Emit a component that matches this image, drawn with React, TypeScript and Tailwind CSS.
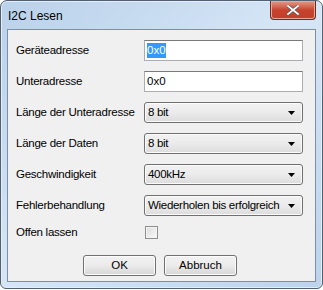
import React from 'react';

const font = { fontFamily: '"Liberation Sans", Arial, sans-serif' };

function Arrow() {
  return (
    <svg width="7" height="4" viewBox="0 0 7 4" className="shrink-0">
      <path d="M0 0h7L3.5 4z" fill="#000" />
    </svg>
  );
}

function Select({ value }: { value: string }) {
  return (
    <div className="h-[21px] w-[159px] shrink-0 flex items-center justify-between rounded-[3px] border border-[#707070] bg-gradient-to-b from-[#f2f2f2] via-[#ebebeb] to-[#dcdcdc] pl-[3px] pr-[7px] shadow-[inset_0_0_0_1px_#fbfbfb]">
      <span className="text-[11.5px] tracking-[-0.3px] text-black leading-none whitespace-nowrap">{value}</span>
      <Arrow />
    </div>
  );
}

function TextBox({ value, selected }: { value: string; selected?: boolean }) {
  return (
    <div className="h-[21px] w-[159px] shrink-0 flex items-center border border-[#abadb3] border-t-[#7a7a7a] bg-white px-[2px]">
      <span
        className={
          'text-[11.5px] leading-[15px] ' +
          (selected ? 'bg-[#3399ff] text-white' : 'text-black')
        }
      >
        {value}
      </span>
    </div>
  );
}

function Row({ label, children, h = 'h-[21px]' }: { label: string; children: React.ReactNode; h?: string }) {
  return (
    <div className={'flex items-center ' + h}>
      <span className="w-[128px] shrink-0 whitespace-nowrap text-[11.5px] tracking-[-0.25px] text-black leading-none">{label}</span>
      {children}
    </div>
  );
}

function Button({ label }: { label: string }) {
  return (
    <div className="h-[21px] w-[73px] flex items-center justify-center rounded-[3px] border border-[#707070] bg-gradient-to-b from-[#f2f2f2] via-[#ebebeb] to-[#d6d6d6] shadow-[inset_0_0_0_1px_#fcfcfc] text-[11.5px] text-black">
      {label}
    </div>
  );
}

export default function App() {
  return (
    <div className="w-[323px] h-[290px] bg-white" style={font}>
      <div className="w-[323px] h-[289px] flex flex-col rounded-t-[7px] rounded-b-[6px] border border-[#52606f] bg-gradient-to-br from-[#b9d1ea] via-[#d6e6f6] to-[#bcd3ec] px-[6px] pb-[6px] shadow-[inset_0_0_0_1px_#e4eef9]">
        {/* Title bar */}
        <div className="h-[28px] flex items-start justify-between shrink-0">
          <span className="pl-[1px] pt-[7px] text-[12px] text-black leading-[16px]">I2C Lesen</span>
          <div className="w-[46px] h-[19px] flex items-center justify-center rounded-b-[4px] border border-t-0 border-[#6d2a22] bg-gradient-to-b from-[#e09a8a] via-[#c8432d] to-[#c0402c] shadow-[inset_0_0_0_1px_#eaa898]">
            <svg width="12" height="10" viewBox="0 0 12 10">
              <path d="M1 1l10 8M11 1L1 9" stroke="#555" strokeWidth="3.2" strokeLinecap="square" />
              <path d="M1 1l10 8M11 1L1 9" stroke="#fff" strokeWidth="1.8" strokeLinecap="square" />
            </svg>
          </div>
        </div>

        {/* Client area */}
        <div className="flex-1 flex flex-col border border-[#7d8fa5] bg-[#f0f0f0] pl-[8px] pt-[10px]">
          <div className="flex flex-col gap-[10px]">
            <Row label="Geräteadresse">
              <TextBox value="0x0" selected />
            </Row>
            <Row label="Unteradresse">
              <TextBox value="0x0" />
            </Row>
            <Row label="Länge der Unteradresse">
              <Select value="8 bit" />
            </Row>
            <Row label="Länge der Daten">
              <Select value="8 bit" />
            </Row>
            <Row label="Geschwindigkeit">
              <Select value="400kHz" />
            </Row>
            <Row label="Fehlerbehandlung">
              <Select value="Wiederholen bis erfolgreich" />
            </Row>
            <Row label="Offen lassen" h="h-[13px]">
              <div className="ml-[1px] w-[13px] h-[13px] border border-[#8e8f8f] bg-gradient-to-br from-[#dcdcdc] to-[#fafafa] shadow-[inset_0_0_0_1px_#f4f4f4]" />
            </Row>
          </div>
          <div className="flex gap-[8px] pl-[67px] mt-[16px]">
            <Button label="OK" />
            <Button label="Abbruch" />
          </div>
        </div>
      </div>
    </div>
  );
}
